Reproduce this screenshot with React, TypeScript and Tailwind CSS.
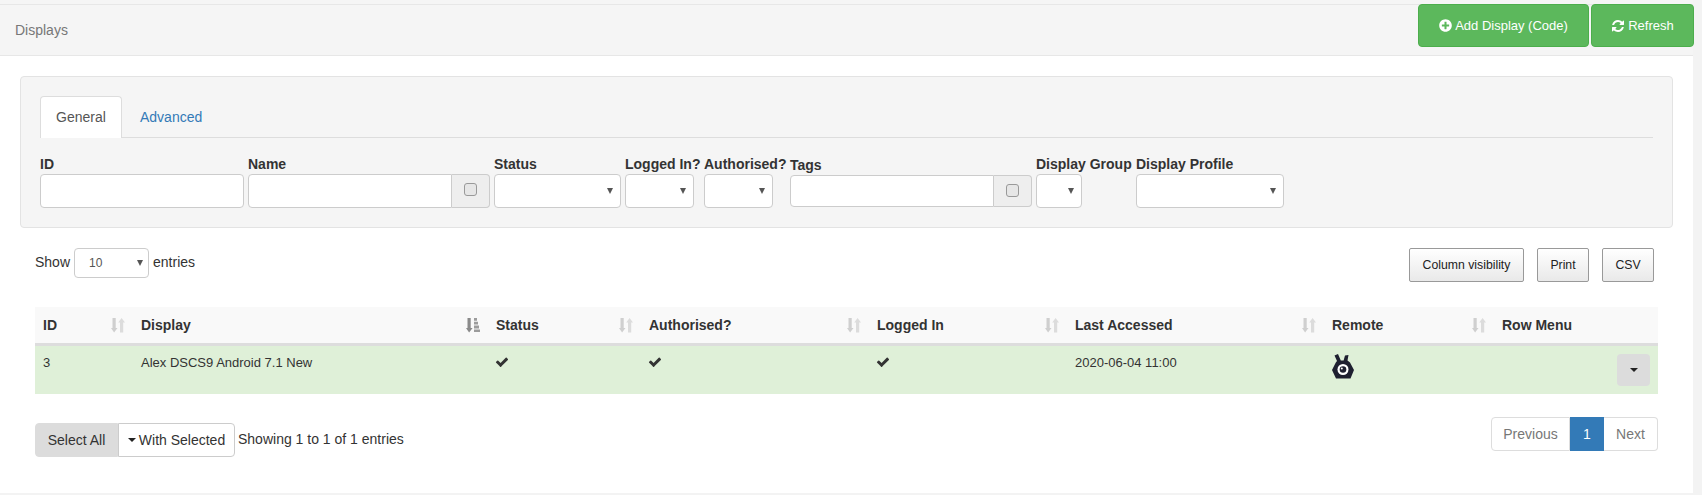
import React from "react";
import { FaPlusCircle } from "react-icons/fa";

function Sort({ active }: { active?: boolean }) {
  if (active) {
    return (
      <svg width="14" height="16" viewBox="0 0 14 16" className="shrink-0">
        <path d="M1.5 1h3.2v10H6.6L3.1 15.500 0 11h1.500z" fill="#8a8a8a" />
        <path d="M8 1h3v2.800H8zM8 4.800h4v2.800H8zM8 8.600h5v2.800H8zM8 12.400h6V15H8z" fill="#9c9c9c" />
      </svg>
    );
  }
  return (
    <svg width="14" height="16" viewBox="0 0 14 16" className="shrink-0">
      <path d="M1.500 1h3.200v10H6.500L3.100 15.500 0 11h1.500z" fill="#cfcfcf" />
      <path d="M9 15.500h3.200V5.500H14L10.600 1 7.200 5.500H9z" fill="#dcdcdc" />
    </svg>
  );
}

function Check() {
  return (
    <svg width="14" height="14" viewBox="0 0 1792 1792" className="block mt-[1px] -ml-[1px]">
      <path
        d="M1671 566q0 40-28 68l-724 724-136 136q-28 28-68 28t-68-28l-136-136-362-362q-28-28-28-68t28-68l136-136q28-28 68-28t68 28l294 295 656-657q28-28 68-28t68 28l136 136q28 28 28 68z"
        fill="#333"
      />
    </svg>
  );
}

function Refresh() {
  return (
    <svg width="14" height="14" viewBox="0 0 1792 1792" className="block">
      <path
        d="M1639 1056q0 5-1 7-64 268-268 434.500t-478 166.500q-146 0-282.500-55t-243.500-157l-129 129q-19 19-45 19t-45-19-19-45v-448q0-26 19-45t45-19h448q26 0 45 19t19 45-19 45l-137 137q71 66 161 102t187 36q134 0 250-65t186-179q11-17 53-117 8-23 30-23h192q13 0 22.500 9.500t9.500 22.500zm25-800v448q0 26-19 45t-45 19h-448q-26 0-45-19t-19-45 19-45l138-138q-148-137-349-137-134 0-250 65t-186 179q-11 17-53 117-8 23-30 23h-199q-13 0-22.500-9.500t-9.500-22.500v-7q65-268 270-434.500t480-166.500q146 0 284 55.500t245 156.500l130-129q19-19 45-19t45 19 19 45z"
        fill="#fff"
      />
    </svg>
  );
}

function Caret() {
  return <span className="inline-block w-0 h-0 border-x-4 border-x-transparent border-t-4 border-t-[#222]" />;
}

function Select({ className }: { className: string }) {
  return (
    <div className={"h-[34px] bg-white border border-[#ccc] rounded flex items-center justify-end pr-[7px] " + className}>
      <span className="w-0 h-0 border-x-[3.5px] border-x-transparent border-t-[6px] border-t-[#555]" />
    </div>
  );
}

function Box() {
  return <span className="block w-[13px] h-[13px] rounded-[3px] border border-[#999] bg-[#e6e6e6]" />;
}

function Field({ label, className, children }: { label: string; className: string; children: React.ReactNode }) {
  return (
    <div className={"flex flex-col " + className}>
      <label className="font-bold text-[14px] leading-[20px] text-[#333] whitespace-nowrap">{label}</label>
      {children}
    </div>
  );
}

const cols = [
  { name: "ID", w: "w-[98px]" },
  { name: "Display", w: "w-[355px]", active: true },
  { name: "Status", w: "w-[153px]" },
  { name: "Authorised?", w: "w-[228px]" },
  { name: "Logged In", w: "w-[198px]" },
  { name: "Last Accessed", w: "w-[257px]" },
  { name: "Remote", w: "w-[170px]" },
  { name: "Row Menu", w: "w-[164px]", nosort: true },
];

export default function App() {
  return (
    <div className="w-[1702px] h-[495px] overflow-hidden bg-[#f3f3f3] text-[#333] text-[14px] leading-[20px] font-['Liberation_Sans',Arial,sans-serif]">
      <div className="w-[1693px] h-[493px] bg-white">
        <div className="h-[56px] pt-[4px] bg-[#f5f5f5]">
          <div className="h-[52px] bg-[#f5f5f5] border-t border-b border-[#e7e7e7] flex justify-between pl-[15px]">
            <div className="text-[14px] text-[#777] pt-[15px]">Displays</div>
            <div className="flex gap-[2px] -mt-[1px] -mr-[1px]">
              <button className="w-[171px] h-[43px] bg-[#5cb85c] border border-[#4cae4c] rounded text-white text-[13px] flex items-center justify-center gap-[3px]">
                <FaPlusCircle className="w-[13px] h-[13px]" />Add Display (Code)
              </button>
              <button className="w-[103px] h-[43px] bg-[#5cb85c] border border-[#4cae4c] rounded text-white text-[13px] flex items-center justify-center gap-[3px]">
                <Refresh />Refresh
              </button>
            </div>
          </div>
        </div>

        <div className="ml-[20px] mt-[20px] w-[1653px] h-[152px] bg-[#f5f5f5] border border-[#e3e3e3] rounded pl-[19px] pr-[19px] pt-[19px]">
          <div className="flex h-[42px] border-b border-[#ddd]">
            <div className="w-[82px] h-[42px] bg-white border border-[#ddd] border-b-0 rounded-t flex items-center justify-center text-[#555] pb-[2px]">General</div>
            <div className="ml-[3px] px-[15px] h-[41px] flex items-center text-[#337ab7]">Advanced</div>
          </div>
          <div className="flex items-start mt-[16px]">
            <Field label="ID" className="w-[204px]">
              <div className="h-[34px] bg-white border border-[#ccc] rounded" />
            </Field>
            <Field label="Name" className="w-[242px] ml-[4px]">
              <div className="flex h-[34px]">
                <div className="w-[204px] bg-white border border-[#ccc] rounded-l" />
                <div className="flex-1 bg-[#eee] border border-l-0 border-[#ccc] rounded-r flex items-center justify-center pb-[3px]"><Box /></div>
              </div>
            </Field>
            <Field label="Status" className="w-[127px] ml-[4px]">
              <Select className="w-[127px]" />
            </Field>
            <Field label="Logged In?" className="w-[69px] ml-[4px]">
              <Select className="w-[69px]" />
            </Field>
            <Field label="Authorised?" className="w-[69px] ml-[10px]">
              <Select className="w-[69px]" />
            </Field>
            <div className="w-[242px] ml-[17px] flex flex-col">
              <label className="font-bold text-[14px] leading-[20px] mt-[1px] text-[#333]">Tags</label>
              <div className="flex h-[32px]">
                <div className="w-[204px] bg-white border border-[#ccc] rounded-l" />
                <div className="flex-1 bg-[#eee] border border-l-0 border-[#ccc] rounded-r flex items-center justify-center pb-[2px]"><Box /></div>
              </div>
            </div>
            <Field label="Display Group" className="w-[46px] ml-[4px]">
              <Select className="w-[46px]" />
            </Field>
            <Field label="Display Profile" className="w-[148px] ml-[54px]">
              <Select className="w-[148px]" />
            </Field>
          </div>
        </div>

        <div className="ml-[35px] w-[1623px]">
          <div className="flex justify-between items-start mt-[20px] h-[59px]">
            <div className="flex items-start">
              <span className="mt-[4px] mr-[4px]">Show</span>
              <div className="w-[75px] h-[30px] bg-white border border-[#ccc] rounded flex items-center justify-between pl-[14px] pr-[5px] text-[12px] text-[#555]">
                10
                <span className="w-0 h-0 border-x-[3.5px] border-x-transparent border-t-[6px] border-t-[#555]" />
              </div>
              <span className="mt-[4px] ml-[4px]">entries</span>
            </div>
            <div className="flex gap-[13px] pr-[4px]">
              <button className="w-[115px] h-[34px] text-[12.25px] text-[#222] border border-[#999] rounded-[2px] bg-gradient-to-b from-white to-[#e9e9e9]">Column visibility</button>
              <button className="w-[52px] h-[34px] text-[12.25px] text-[#222] border border-[#999] rounded-[2px] bg-gradient-to-b from-white to-[#e9e9e9]">Print</button>
              <button className="w-[52px] h-[34px] text-[12.25px] text-[#222] border border-[#999] rounded-[2px] bg-gradient-to-b from-white to-[#e9e9e9]">CSV</button>
            </div>
          </div>

          <table className="table-fixed w-[1623px] border-separate border-spacing-0 text-[13px]">
            <thead>
              <tr className="h-[39px] bg-[#f9f9f9]">
                {cols.map((c) => (
                  <th key={c.name} className={c.w + " border-b-[3px] border-[#ddd] p-0 text-left font-bold text-[14px]"}>
                    <div className="flex items-center justify-between pl-[8px] pr-[8px]">
                      <span className="whitespace-nowrap">{c.name}</span>
                      {!c.nosort && <Sort active={c.active} />}
                    </div>
                  </th>
                ))}
              </tr>
            </thead>
            <tbody>
              <tr className="h-[48px] bg-[#dff0d8] align-top">
                <td className="px-[8px] pt-[7px]">3</td>
                <td className="px-[8px] pt-[7px]">Alex DSCS9 Android 7.1 New</td>
                <td className="px-[8px] pt-[8px]"><Check /></td>
                <td className="px-[8px] pt-[8px]"><Check /></td>
                <td className="px-[8px] pt-[8px]"><Check /></td>
                <td className="px-[8px] pt-[7px]">2020-06-04 11:00</td>
                <td className="px-[8px] pt-[8px]">
                  <svg width="22" height="25" viewBox="0 0 22 25" className="block">
                    <path d="M2.500 1.500L6 0l2.800 6.500h2.800L13 1.500 16.500 1 15.500 6.500 18 8.500l4 7.500-3.500 8.500H4L0 16l3.800-7.500L5 7z" fill="#1e2030" />
                    <circle cx="11" cy="15.500" r="5.500" fill="#fff" />
                    <circle cx="11" cy="15.500" r="3.300" fill="#1e2030" />
                    <circle cx="9.800" cy="14.500" r="1" fill="#fff" />
                  </svg>
                </td>
                <td className="p-0">
                  <div className="flex justify-end pr-[8px] pt-[8px]">
                    <div className="w-[33px] h-[32px] rounded bg-[#dcdcdc] flex items-center justify-center">
                      <Caret />
                    </div>
                  </div>
                </td>
              </tr>
            </tbody>
          </table>

          <div className="flex justify-between items-start mt-[23px]">
            <div className="flex items-start mt-[6px]">
              <div className="flex h-[34px]">
                <div className="w-[83px] bg-[#dcdcdc] border border-[#dcdcdc] rounded-l flex items-center justify-center">Select All</div>
                <div className="w-[117px] bg-white border border-[#ccc] rounded-r flex items-center justify-center gap-[3px]">
                  <Caret />With Selected
                </div>
              </div>
              <span className="ml-[3px] mt-[6px]">Showing 1 to 1 of 1 entries</span>
            </div>
            <div className="flex h-[34px] text-[14px]">
              <div className="w-[79px] bg-white border border-[#ddd] rounded-l flex items-center justify-center text-[#777]">Previous</div>
              <div className="w-[34px] bg-[#337ab7] text-white flex items-center justify-center">1</div>
              <div className="w-[54px] bg-white border border-l-0 border-[#ddd] rounded-r flex items-center justify-center text-[#777]">Next</div>
            </div>
          </div>
        </div>
      </div>
    </div>
  );
}
